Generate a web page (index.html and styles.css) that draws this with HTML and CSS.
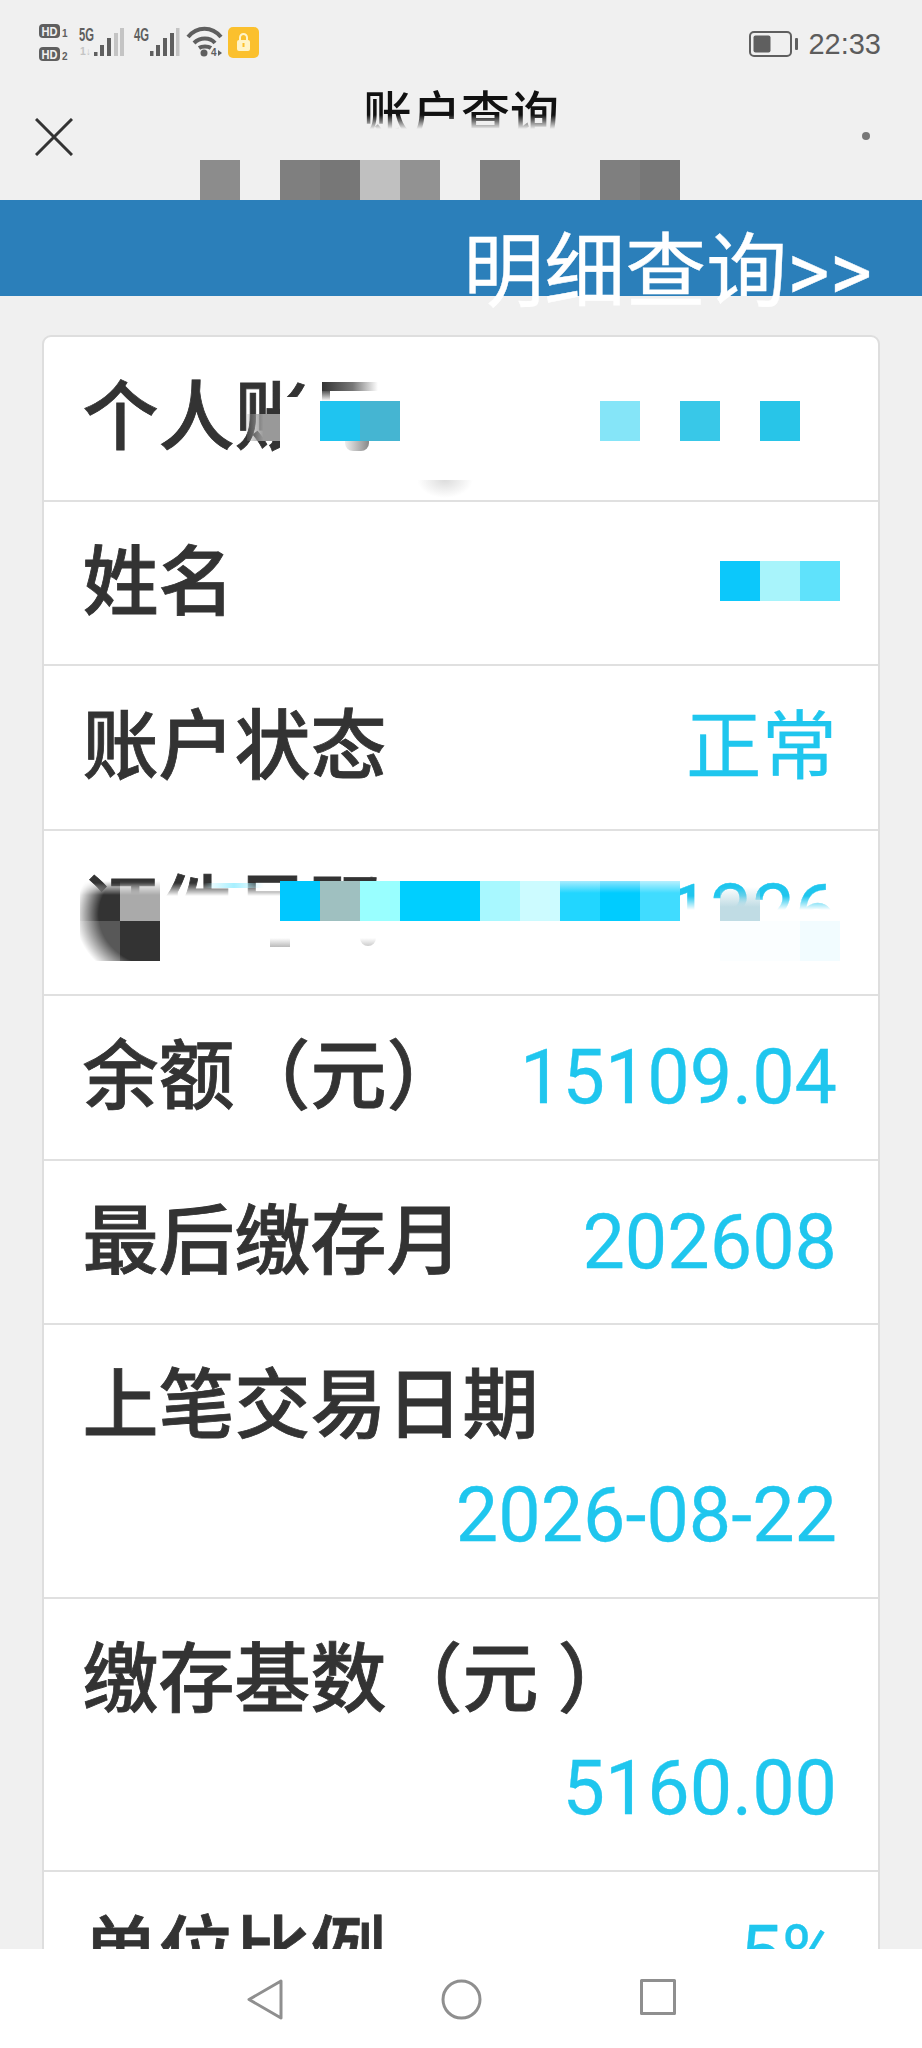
FILE: index.html
```html
<!DOCTYPE html>
<html lang="zh">
<head>
<meta charset="utf-8">
<title>账户查询</title>
<link rel="stylesheet" href="styles.css">
</head>
<body>
<div class="page">
  <div class="status">
    <svg class="status-left" viewBox="0 0 260 84" width="260" height="84">
      <rect class="ink" x="39" y="24" width="21" height="14" rx="4"/>
      <text class="hd" x="41.500" y="36" textLength="16" lengthAdjust="spacingAndGlyphs">HD</text>
      <text class="tiny" x="62" y="37">1</text>
      <rect class="ink" x="39" y="47" width="21" height="14" rx="4"/>
      <text class="hd" x="41.500" y="59" textLength="16" lengthAdjust="spacingAndGlyphs">HD</text>
      <text class="tiny" x="62" y="60">2</text>
      <text class="net" x="79" y="41" textLength="15" lengthAdjust="spacingAndGlyphs">5G</text>
      <text class="tiny light" x="80" y="55" textLength="11" lengthAdjust="spacingAndGlyphs">1↓</text>
      <rect class="ink" x="94" y="52" width="3.500" height="4"/>
      <rect class="ink" x="100" y="45" width="4" height="11"/>
      <rect class="ink" x="107" y="38" width="4" height="18"/>
      <rect class="pale" x="114" y="33" width="4" height="23"/>
      <rect class="pale" x="120" y="28" width="4" height="28"/>
      <text class="net" x="134" y="41" textLength="15" lengthAdjust="spacingAndGlyphs">4G</text>
      <rect class="ink" x="150" y="51" width="3.500" height="5"/>
      <rect class="ink" x="156" y="45" width="4" height="11"/>
      <rect class="ink" x="163" y="38" width="4" height="18"/>
      <rect class="ink" x="170" y="33" width="4" height="23"/>
      <rect class="pale" x="176" y="28" width="3.500" height="28"/>
      <path class="wifi" d="M188 37c9-11 24-11 33 0M194 43c6-6 16-6 21 0"/>
      <path class="wifi" d="M199 48c3-2 9-2 12 0"/>
      <circle class="ink" cx="204" cy="53" r="3.500"/>
      <text class="tiny" x="211" y="56">4</text>
      <path class="ink" d="M218 50l4 3-4 3z"/>
      <rect class="lock-bg" x="228" y="27" width="31" height="31" rx="5"/>
      <path class="shackle" d="M240 40v-2.500a3.500 3.500 0 0 1 7 0v2.500"/>
      <rect class="lock-body" x="237" y="40" width="13" height="11" rx="2"/>
      <rect class="lock-bg" x="242.500" y="43" width="2" height="4"/>
    </svg>
    <div class="status-right">
      <svg class="battery" viewBox="0 0 50 26" width="50" height="26">
        <rect class="batt-frame" x="1" y="1" width="41" height="24" rx="4"/>
        <rect class="ink" x="4.500" y="4.500" width="17" height="17" rx="2"/>
        <rect class="ink" x="46" y="7" width="3" height="12" rx="1"/>
      </svg>
      <span class="time">22:33</span>
    </div>
  </div>

  <header class="header">
    <svg class="close" viewBox="0 0 38 38" width="38" height="38">
      <path d="M1 1l36 36M37 1L1 37"/>
    </svg>
    <h1 class="title">账户查询</h1>
    <span class="dot"></span>
    <div class="mosaic mosaic-top">
      <i class="g1"></i><i class="gap"></i><i class="g2"></i><i class="g3"></i><i class="g4"></i><i class="g5"></i><i class="gap"></i><i class="g2"></i><i class="gap"></i><i class="gap"></i><i class="g2"></i><i class="g3"></i>
    </div>
  </header>

  <div class="bar"><a class="bar-link">明细查询&gt;&gt;</a></div>

  <main class="card">
    <section class="row">
      <span class="label">个人账户</span>
      <span class="wipe wipe-a"></span>
      <span class="wipe wipe-b"></span>
      <span class="shard shard-top"></span>
      <span class="shard shard-side"></span>
      <div class="mosaic mosaic-acct-gray"><i class="gfade"></i></div>
      <div class="mosaic mosaic-acct"><i class="b1"></i><i class="b2"></i></div>
      <div class="mosaic mosaic-acct2"><i class="b3"></i><i class="gap"></i><i class="b4"></i><i class="gap"></i><i class="b5"></i></div>
      <span class="shard shard-a"></span>
      <span class="smear"></span>
    </section>
    <section class="row">
      <span class="label">姓名</span>
      <div class="mosaic mosaic-name"><i class="c1"></i><i class="c2"></i><i class="c3"></i></div>
    </section>
    <section class="row">
      <span class="label">账户状态</span>
      <span class="value">正常</span>
    </section>
    <section class="row">
      <span class="label label-cut">证件号码</span>
      <span class="value value-cut">1326</span>
      <div class="mosaic-dark"><i class="d1"></i><i class="d2"></i><i class="d3"></i><i class="d1"></i></div>
      <span class="streak"></span>
      <div class="mosaic mosaic-id">
        <i class="e1"></i><i class="e2"></i><i class="e3"></i><i class="e4"></i><i class="e4"></i><i class="e5"></i><i class="e6"></i><i class="e7"></i><i class="e8"></i><i class="e9"></i><i class="gap"></i><i class="e10"></i>
      </div>
      <div class="mosaic mosaic-id2"><i class="f1"></i><i class="f1"></i><i class="f2"></i></div>
      <span class="shard shard-b"></span>
      <span class="shard shard-c"></span>
    </section>
    <section class="row">
      <span class="label">余额（元）</span>
      <span class="value">15109.04</span>
    </section>
    <section class="row">
      <span class="label">最后缴存月</span>
      <span class="value">202608</span>
    </section>
    <section class="row">
      <span class="label">上笔交易日期</span>
      <span class="value">2026-08-22</span>
    </section>
    <section class="row">
      <span class="label">缴存基数（元 ）</span>
      <span class="value">5160.00</span>
    </section>
    <section class="row">
      <span class="label">单位比例</span>
      <span class="value">5%</span>
    </section>
  </main>

  <nav class="navbar">
    <svg viewBox="0 0 36 41" width="36" height="41"><path d="M34 2L2 20.500 34 39z"/></svg>
    <svg viewBox="0 0 41 41" width="41" height="41"><circle cx="20.500" cy="20.500" r="18.500"/></svg>
    <svg viewBox="0 0 36 36" width="36" height="36"><rect x="1.500" y="1.500" width="33" height="33"/></svg>
  </nav>
</div>
</body>
</html>
```

FILE: styles.css
```css
* { box-sizing: border-box; }
html, body { margin: 0; padding: 0; }
body {
  width: 922px;
  height: 2048px;
  overflow: hidden;
  background: #f0f0f0;
  font-family: Roboto, "Noto Sans CJK SC", sans-serif;
}
.page { position: relative; width: 922px; height: 2048px; overflow: hidden; }

/* status bar */
.status { height: 84px; display: flex; justify-content: space-between; align-items: flex-start; }
.status-left { display: block; flex: none; }
.status-right { display: flex; align-items: center; gap: 9px; padding: 29px 41px 0 0; }
.ink { fill: #5f5f5f; }
.pale { fill: #c4c4c4; }
.hd { font: 700 13px "Liberation Sans", sans-serif; fill: #f0f0f0; }
.tiny { font: 700 10px "Liberation Sans", sans-serif; fill: #5f5f5f; }
.tiny.light { fill: #c4c4c4; }
.net { font: 700 18px "Liberation Sans", sans-serif; fill: #5f5f5f; }
.wifi { fill: none; stroke: #5f5f5f; stroke-width: 4; }
.lock-bg { fill: #fbc02d; }
.lock-body { fill: #fff4c8; }
.shackle { fill: none; stroke: #fff4c8; stroke-width: 2; }
.batt-frame { fill: none; stroke: #5f5f5f; stroke-width: 2; }
.battery { display: block; }
.time { font: 400 29px/30px "Liberation Sans", sans-serif; color: #5c5c5c; }

/* header */
.header {
  position: relative;
  height: 116px;
  display: grid;
  grid-template-columns: 1fr auto 1fr;
  padding: 0 44px;
}
.close { display: block; margin: 34px 0 0 -9px; }
.close path { fill: none; stroke: #333; stroke-width: 3; }
.title {
  margin: 2px 0 0;
  font: 500 49px/60px Roboto, "Noto Sans CJK SC", sans-serif;
  color: #111;
  -webkit-mask-image: linear-gradient(#000 0, #000 29px, transparent 43px);
  mask-image: linear-gradient(#000 0, #000 29px, transparent 43px);
}
.dot {
  justify-self: end;
  margin: 48px 8px 0 0;
  width: 8px;
  height: 8px;
  border-radius: 50%;
  background: #777;
}

/* mosaic blocks */
.mosaic { position: absolute; display: flex; height: 40px; }
.mosaic i { display: block; width: 40px; height: 40px; flex: none; }
.mosaic-top { left: 200px; bottom: 0; }
.g1 { background: #8c8c8c; }
.g2 { background: #7f7f7f; }
.g3 { background: #777; }
.g4 { background: #c0c0c0; }
.g5 { background: #929292; }

/* blue bar */
.bar {
  height: 96px;
  background: #2b7fba;
  display: flex;
  justify-content: flex-end;
  padding-right: 50px;
}
.bar-link {
  font: 400 81px/108px Roboto, "Noto Sans CJK SC", sans-serif;
  color: #fff;
  white-space: nowrap;
  height: 96px;
  padding-top: 19px;
  -webkit-text-stroke: 0.4px #fff;
}

/* card */
.card {
  margin: 39px 42px 0;
  background: #fff;
  border: 2px solid #dedede;
  border-radius: 9px;
}
.row {
  position: relative;
  display: flex;
  flex-wrap: wrap;
  justify-content: space-between;
  padding: 27px 41px 27px 38.500px;
  border-bottom: 2px solid #e0e0e0;
  font-size: 76px;
  line-height: 108.700px;
}
.label { font-weight: 500; color: #333; white-space: nowrap; -webkit-text-stroke: 0.8px #333; }
.value { margin-left: auto; font-size: 75.500px; color: #1fc6ee; white-space: nowrap; -webkit-text-stroke: 0.3px #1fc6ee; }

/* masked row 1 */
.wipe { position: absolute; background: #fff; }
.wipe-a { left: 236px; top: 60px; width: 40px; height: 60px; }
.wipe-b { left: 276px; top: 30px; width: 95px; height: 90px; }
.shard-top { left: 278px; top: 45px; width: 56px; height: 9px; background: linear-gradient(90deg, #333, #777 55%, rgba(255,255,255,0)); }
.shard-side { left: 278px; top: 54px; width: 8px; height: 10px; background: linear-gradient(#555, rgba(255,255,255,0)); }
.mosaic-acct-gray { left: 203px; top: 77px; height: 27px; }
.mosaic-acct-gray i.gfade { width: 33px; height: 27px; background: linear-gradient(90deg, rgba(153,153,153,.2), #999 50%); }
.mosaic-acct { left: 276px; top: 64px; }
.mosaic-acct2 { left: 556px; top: 64px; }
.b1 { background: #1fc4f0; }
.b2 { background: #45b5d2; }
.b3 { background: #85e5f8; }
.b4 { background: #38c8e8; }
.b5 { background: #28c5e8; }
.shard { position: absolute; display: block; }
.shard-a { left: 301px; top: 104px; width: 24px; height: 10px; background: linear-gradient(90deg, #eee, #888); border-radius: 0 0 8px 8px; }
.smear { position: absolute; left: 373px; top: 143px; width: 56px; height: 18px; background: radial-gradient(ellipse at 50% 0, #dcdcdc, rgba(255,255,255,0) 70%); }

/* name */
.mosaic-name { left: 676px; top: 59px; }
.c1 { background: #0cc8fb; }
.c2 { background: #a8f4fb; }
.c3 { background: #5fe2fb; }

/* ID row */
.label-cut {
  -webkit-mask-image: linear-gradient(#000 0, #000 25px, transparent 38px);
  mask-image: linear-gradient(#000 0, #000 25px, transparent 38px);
}
.value-cut {
  -webkit-mask-image: linear-gradient(#000 0, #000 38px, transparent 52px);
  mask-image: linear-gradient(#000 0, #000 38px, transparent 52px);
}
.mosaic-dark {
  position: absolute;
  left: 36px;
  top: 50px;
  width: 80px;
  height: 80px;
  display: grid;
  grid-template-columns: 40px 40px;
  -webkit-mask-image: radial-gradient(ellipse 85px 72px at 100% 42%, #000 72%, transparent 100%), linear-gradient(transparent 0, #000 14px);
  mask-image: radial-gradient(ellipse 85px 72px at 100% 42%, #000 72%, transparent 100%), linear-gradient(transparent 0, #000 14px);
  -webkit-mask-composite: source-in;
  mask-composite: intersect;
}
.mosaic-dark i { display: block; }
.d1 { background: #333; }
.d2 { background: #aaa; }
.d3 { background: #585858; }
.streak { position: absolute; left: 160px; top: 52px; width: 60px; height: 5px; background: linear-gradient(90deg, rgba(255,255,255,0), #a8f0ff, rgba(255,255,255,0)); }
.mosaic-id { left: 236px; top: 50px; }
.mosaic-id2 { left: 676px; top: 90px; }
.e1 { background: #00c8ff; }
.e2 { background: #9fc0c0; }
.e3 { background: #99ffff; }
.e4 { background: #00cfff; }
.e5 { background: #a8f8ff; }
.e6 { background: #ccfbff; }
.e7 { background: linear-gradient(#a8ecff, #22d6ff 30%); }
.e8 { background: linear-gradient(#8ae4ff, #00ccff 30%); }
.e9 { background: linear-gradient(#b8f0ff, #40dcff 30%); }
.e10 { background: linear-gradient(rgba(192,220,228,0) 15%, #c0dce4 65%); }
.f1 { background: #fbfeff; }
.f2 { background: #f2fcff; }
.shard-b { left: 226px; top: 107px; width: 20px; height: 9px; background: linear-gradient(#fff, #bbb); }
.shard-c { left: 316px; top: 107px; width: 16px; height: 8px; background: linear-gradient(#fff, #ccc); border-radius: 0 0 8px 8px; }

/* navigation bar */
.navbar {
  position: absolute;
  left: 0;
  right: 0;
  bottom: 0;
  height: 99px;
  background: #fff;
  display: flex;
  justify-content: center;
  align-items: flex-start;
  gap: 158px;
  padding: 30px 0 0;
}
.navbar svg { display: block; }
.navbar path, .navbar circle, .navbar rect { fill: none; stroke: #8f8f8f; stroke-width: 3; stroke-linejoin: round; }
```
